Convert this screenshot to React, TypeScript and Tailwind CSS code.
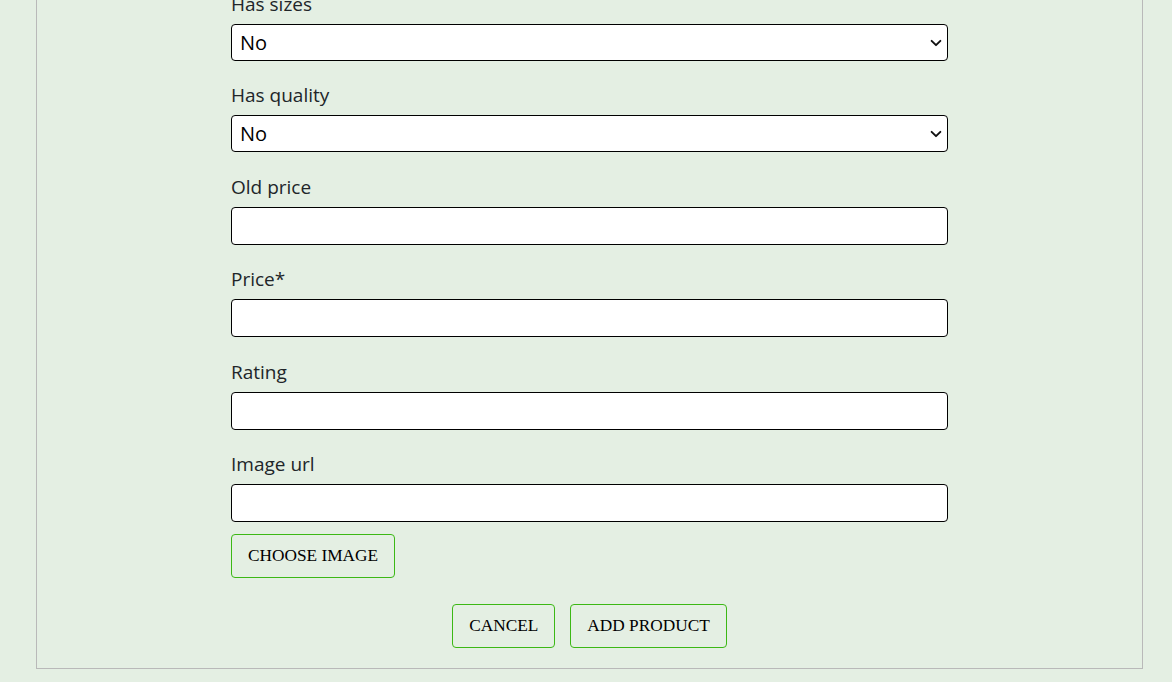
import React from "react";

const Chevron = () => (
  <svg
    className="pointer-events-none absolute right-[5px] top-1/2 -translate-y-1/2"
    width="14"
    height="14"
    viewBox="0 0 16 16"
    fill="none"
  >
    <path d="M3 5.5 L8 10.5 L13 5.5" stroke="#111" strokeWidth="2.2" strokeLinecap="round" strokeLinejoin="round" />
  </svg>
);

function Label({ children }: { children: React.ReactNode }) {
  return (
    <label className="mb-2 block h-6 text-[19px] leading-6 text-[#212529]">{children}</label>
  );
}

function SelectField({ label, last }: { label: string; last?: boolean }) {
  return (
    <div className={last ? "mb-[23px]" : "mb-[22px]"}>
      <Label>{label}</Label>
      <div className="relative">
        <select
          defaultValue="No"
          className="block h-[37px] w-full appearance-none rounded-[4px] border border-black bg-white pl-2 text-[20px] text-black outline-none"
          style={{ fontFamily: "'Open Sans', 'Noto Sans', sans-serif" }}
        >
          <option>No</option>
          <option>Yes</option>
        </select>
        <Chevron />
      </div>
    </div>
  );
}

function InputField({ label, extra }: { label: string; extra?: boolean }) {
  return (
    <div className={extra ? "mb-[23px]" : "mb-[22px]"}>
      <Label>{label}</Label>
      <input
        type="text"
        className="block h-[38px] w-full rounded-[4px] border border-black bg-white px-2 text-[20px] text-black outline-none"
      />
    </div>
  );
}

function GreenButton({ children }: { children: React.ReactNode }) {
  return (
    <button
      type="button"
      className="rounded-[4px] border border-[#3cb815] bg-transparent px-4 py-3 text-[17.3px] leading-[18px] text-black"
      style={{ fontFamily: "'Liberation Serif', 'Times New Roman', serif" }}
    >
      {children}
    </button>
  );
}

export default function App() {
  return (
    <div
      className="h-[682px] w-[1172px] overflow-hidden bg-[#e4efe3]"
      style={{ fontFamily: "'Open Sans', 'Noto Sans', sans-serif" }}
    >
      <div className="-mt-[40px] ml-[36px] w-[1107px] border border-[#b9b9b9] px-[194px] pb-[20px] pt-[31px]">
        <SelectField label="Has sizes" />
        <SelectField label="Has quality" last />
        <InputField label="Old price" />
        <InputField label="Price*" extra />
        <InputField label="Rating" />
        <div className="mb-3">
          <Label>Image url</Label>
          <input
            type="text"
            className="block h-[38px] w-full rounded-[4px] border border-black bg-white px-2 text-[20px] text-black outline-none"
          />
        </div>
        <div className="mb-[26px]">
          <GreenButton>CHOOSE IMAGE</GreenButton>
        </div>
        <div className="flex justify-center gap-[15px]">
          <GreenButton>CANCEL</GreenButton>
          <GreenButton>ADD PRODUCT</GreenButton>
        </div>
      </div>
    </div>
  );
}
